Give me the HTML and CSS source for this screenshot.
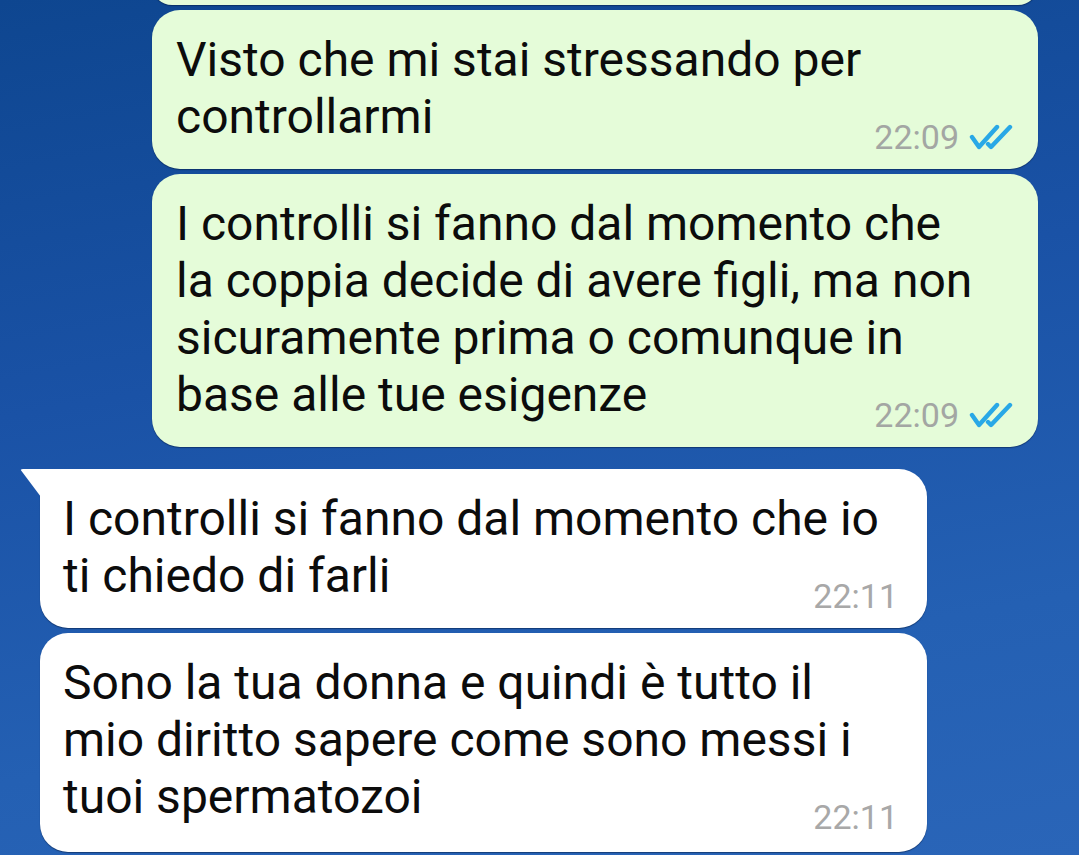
FILE: index.html
```html
<!DOCTYPE html>
<html lang="it">
<head>
  <meta charset="UTF-8" />
  <meta name="viewport" content="width=device-width, initial-scale=1.0"/>
  <title>Chat</title>
  <link rel="stylesheet" href="styles.css">
</head>
<body>
  <div class="chat">
    <div class="msg out stub"></div>

    <div class="msg out">
      <div class="text">Visto che mi stai stressando per controllarmi</div>
      <div class="meta">
        <span class="time">22:09</span>
        <svg class="ticks" viewBox="0 0 44 26" width="44" height="26">
          <path d="M3 13 L10 23 L28 3" />
          <path d="M19 20 L22 23 L41 3" />
        </svg>
      </div>
    </div>

    <div class="msg out">
      <div class="text">I controlli si fanno dal momento che la coppia decide di avere figli, ma non sicuramente prima o comunque in base alle tue esigenze</div>
      <div class="meta">
        <span class="time">22:09</span>
        <svg class="ticks" viewBox="0 0 44 26" width="44" height="26">
          <path d="M3 13 L10 23 L28 3" />
          <path d="M19 20 L22 23 L41 3" />
        </svg>
      </div>
    </div>

    <div class="msg in tail">
      <div class="text">I controlli si fanno dal momento che io ti chiedo di farli</div>
      <div class="meta">
        <span class="time">22:11</span>
      </div>
    </div>

    <div class="msg in last">
      <div class="text">Sono la tua donna e quindi è tutto il mio diritto sapere come sono messi i tuoi spermatozoi</div>
      <div class="meta">
        <span class="time">22:11</span>
      </div>
    </div>
  </div>
</body>
</html>
```

FILE: styles.css
```css
html, body { margin: 0; height: 100%; }
body {
  overflow: hidden;
  font-family: Roboto, "Noto Sans", sans-serif;
  background: linear-gradient(170deg, #0e4690 0%, #1a52a6 40%, #2460b3 75%, #2a65b8 100%);
  color: #0c0c0c;
}

.chat { display: flex; flex-direction: column; }

.msg {
  position: relative;
  box-sizing: border-box;
  width: 886px;
  margin-top: 5px;
  padding: 21px 25px 12px 24px;
  border-radius: 28px;
  box-shadow: 0 1px 1px rgba(5, 30, 70, 0.55);
}
.msg.out { align-self: flex-end; margin-right: 41px; background: #e5fcd9; }
.msg.out .text { margin-right: 32px; }
.msg.in { align-self: flex-start; margin-left: 40px; width: 887px; background: #fff; padding-left: 23px; padding-right: 29px; }
.msg.stub { height: 40px; margin-top: -35px; padding: 0; }
.msg.tail { margin-top: 22px; border-top-left-radius: 0; }
.msg.last { padding-bottom: 15px; }
.msg.tail::before {
  content: "";
  position: absolute;
  left: -20px;
  top: 0;
  width: 21px;
  height: 28px;
  background: #fff;
  clip-path: polygon(0 0, 100% 0, 100% 100%);
  border-top-left-radius: 3px;
}

.text { font-size: 48px; line-height: 57px; }

.meta {
  display: flex;
  justify-content: flex-end;
  align-items: center;
  gap: 10px;
  height: 40px;
  margin-top: -28px;
}
.time { font-size: 34px; line-height: 40px; color: #a3a6a3; }
.msg.in .time { color: #a8a8a8; }
.ticks { fill: none; stroke: #29a8e6; stroke-width: 4.4; stroke-linecap: round; stroke-linejoin: round; }
```
